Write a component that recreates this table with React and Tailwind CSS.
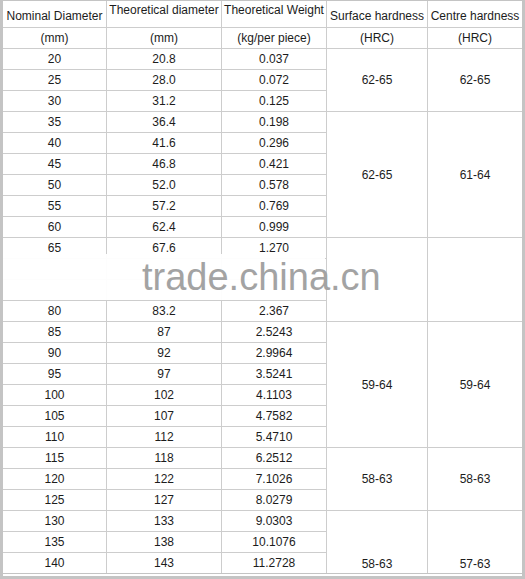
import React from "react";

const rows = [
  ["20", "20.8", "0.037"],
  ["25", "28.0", "0.072"],
  ["30", "31.2", "0.125"],
  ["35", "36.4", "0.198"],
  ["40", "41.6", "0.296"],
  ["45", "46.8", "0.421"],
  ["50", "52.0", "0.578"],
  ["55", "57.2", "0.769"],
  ["60", "62.4", "0.999"],
  ["65", "67.6", "1.270"],
  ["", "", ""],
  ["", "", ""],
  ["80", "83.2", "2.367"],
  ["85", "87", "2.5243"],
  ["90", "92", "2.9964"],
  ["95", "97", "3.5241"],
  ["100", "102", "4.1103"],
  ["105", "107", "4.7582"],
  ["110", "112", "5.4710"],
  ["115", "118", "6.2512"],
  ["120", "122", "7.1026"],
  ["125", "127", "8.0279"],
  ["130", "133", "9.0303"],
  ["135", "138", "10.1076"],
  ["140", "143", "11.2728"],
];

// merged hardness cells, keyed by the row index where they start
const hardness = {
  0: { span: "row-span-3", surface: "62-65", centre: "62-65", align: "items-center" },
  3: { span: "row-span-6", surface: "62-65", centre: "61-64", align: "items-center" },
  9: { span: "row-span-4", surface: "", centre: "", align: "items-center" },
  13: { span: "row-span-6", surface: "59-64", centre: "59-64", align: "items-center" },
  19: { span: "row-span-3", surface: "58-63", centre: "58-63", align: "items-center" },
  22: { span: "row-span-3", surface: "58-63", centre: "57-63", align: "items-end pb-[3px]" },
};

function Cell({ children, className = "" }) {
  return <div className={`bg-white flex justify-center ${className}`}>{children}</div>;
}

export default function App() {
  return (
    <div className="relative w-[525px] h-[579px] bg-[#c4c4c4] text-[12px] text-[#1c1c1c] font-['Liberation_Sans',Arial,sans-serif] overflow-hidden">
      <div className="pt-px pl-[3px] pr-[3px] pb-px">
        <div className="grid grid-cols-[103px_114px_104px_100px_94px] grid-rows-[26px_20px_repeat(25,20px)] gap-px bg-[#cdcdcd] leading-none">
          <Cell className="items-end pb-[5px] whitespace-nowrap">Nominal Diameter</Cell>
          <Cell className="items-start pt-[3px] whitespace-nowrap">Theoretical diameter</Cell>
          <Cell className="items-start pt-[3px] whitespace-nowrap">Theoretical Weight</Cell>
          <Cell className="items-end pb-[5px] whitespace-nowrap">Surface hardness</Cell>
          <Cell className="items-end pb-[5px] whitespace-nowrap">Centre hardness</Cell>

          <Cell className="items-center">(mm)</Cell>
          <Cell className="items-center">(mm)</Cell>
          <Cell className="items-center">(kg/per piece)</Cell>
          <Cell className="items-center">(HRC)</Cell>
          <Cell className="items-center">(HRC)</Cell>

          {rows.map((r, i) => (
            <React.Fragment key={i}>
              <Cell className="items-center">{r[0]}</Cell>
              <Cell className="items-center">{r[1]}</Cell>
              <Cell className="items-center">{r[2]}</Cell>
              {hardness[i] && (
                <>
                  <Cell className={`${hardness[i].span} ${hardness[i].align}`}>{hardness[i].surface}</Cell>
                  <Cell className={`${hardness[i].span} ${hardness[i].align}`}>{hardness[i].centre}</Cell>
                </>
              )}
            </React.Fragment>
          ))}
        </div>
      </div>
      <div className="mx-[3px] h-[2px] bg-white" />

      {/* watermark band */}
      <div className="absolute left-[3px] top-[254px] w-[322px] h-[46px] bg-white/95" />
      <span className="absolute left-[142px] top-[258px] text-[38px] leading-[38px] text-[#a3a3a3] whitespace-nowrap">
        trade.china.cn
      </span>
    </div>
  );
}
